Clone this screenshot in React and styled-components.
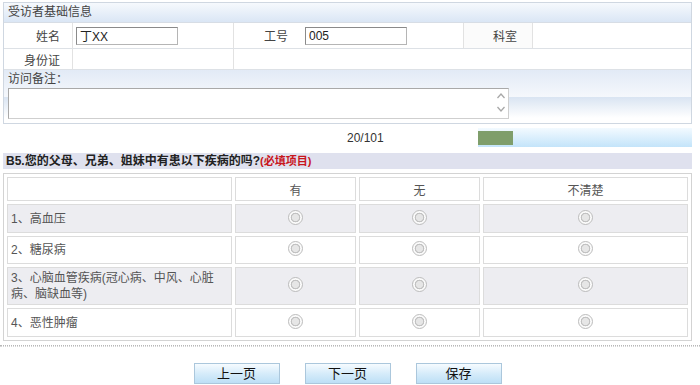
import React from "react";
import styled, { createGlobalStyle } from "styled-components";

const Global = createGlobalStyle`
  html, body { margin: 0; padding: 0; background: #fff; }
  body {
    font-family: "Liberation Sans", "Noto Sans CJK SC", sans-serif;
    font-size: 12px;
    color: #333;
  }
  * { box-sizing: border-box; }
`;

const Page = styled.div`
  width: 700px;
  height: 385px;
  overflow: hidden;
  padding-top: 2px;
`;

const Content = styled.div`
  margin: 0 8px 0 3px;
`;

const Panel = styled.section`
  border: 1px solid #cfd7e1;
`;

const PanelHeader = styled.div`
  height: 20px;
  line-height: 19px;
  padding-left: 4px;
  border-bottom: 1px solid #d7dde5;
  background: linear-gradient(#f6f9fd, #dae6f5);
  color: #444;
`;

const InfoGrid = styled.div`
  display: grid;
  grid-template-columns: 69px 161px 230px 69px 1fr;
  grid-template-rows: 26px 21px;
`;

const Cell = styled.div`
  display: flex;
  align-items: center;
  justify-content: ${(p) => (p.$label ? "flex-end" : "flex-start")};
  padding: ${(p) => (p.$label ? `0 ${p.$pr || 12}px 0 0` : "0 0 0 3px")};
  border-right: ${(p) => (p.$last ? "none" : "1px solid #e2e2e2")};
  border-bottom: 1px solid #dde1e6;
  background: ${(p) => (p.$shade ? "#fbfbfb" : "#fff")};
  grid-column: ${(p) => (p.$span ? `span ${p.$span}` : "auto")};
  color: #444;
`;

const InlineLabel = styled.span`
  width: 51px;
  text-align: right;
  margin-right: 17px;
  color: #444;
`;

const TextInput = styled.input`
  width: 102px;
  height: 18px;
  border: 1px solid #8a8a8a;
  border-right-color: #b5b5b5;
  border-bottom-color: #b5b5b5;
  padding: 0 0 0 3px;
  font: inherit;
  font-size: 12px;
  color: #222;
  background: #fff;
  outline: none;
`;

const Remarks = styled.div`
  background: linear-gradient(
    180deg,
    #e2eaf6 0px,
    #f5f8fc 27px,
    #d9e4f2 27px,
    #ffffff 48px,
    #ffffff 100%
  );
`;

const RemarksTitle = styled.div`
  height: 18px;
  line-height: 18px;
  padding-left: 4px;
  color: #444;
`;

const TextWrap = styled.div`
  padding: 0 0 4px 4px;
`;

const TextBox = styled.div`
  position: relative;
  width: 501px;
  height: 31px;
`;

const Area = styled.textarea`
  display: block;
  width: 100%;
  height: 100%;
  resize: none;
  overflow: hidden;
  border: 1px solid #a9a9a9;
  border-right-color: #cfcfcf;
  border-bottom-color: #cfcfcf;
  background: #fff;
  font: inherit;
  outline: none;
`;

const ScrollArrows = styled.svg`
  position: absolute;
  right: 3px;
  top: 4px;
`;

const ProgressRow = styled.div`
  display: grid;
  grid-template-columns: 344px 131px 1fr;
  height: 19px;
  margin-top: 4px;
  align-items: center;
`;

const Count = styled.span`
  grid-column: 2;
  color: #333;
  font-size: 12px;
`;

const Bar = styled.div`
  height: 19px;
  display: flex;
  align-items: center;
  background: linear-gradient(#f3faff, #c3e4fa);
`;

const Fill = styled.div`
  height: 14px;
  background: #7f9e6b;
`;

const QuestionTitle = styled.div`
  margin-top: 6px;
  height: 16px;
  line-height: 16px;
  padding-left: 3px;
  background: #dfe1ee;
  font-weight: bold;
  color: #222;
  font-size: 12px;
`;

const Required = styled.span`
  color: #c8161d;
  font-size: 11px;
`;

const Matrix = styled.div`
  margin-top: 4px;
  display: grid;
  grid-template-columns: 225px 121px 121px 1fr;
  grid-template-rows: 24px 29px 28px 38px 29px;
  gap: 3px;
  padding: 3px;
  border: 1px solid #d3d3d3;
`;

const HeadCell = styled.div`
  display: flex;
  align-items: center;
  justify-content: center;
  border: 1px solid #dcdcdc;
  background: #fff;
  color: #555;
`;

const RowLabel = styled.div`
  display: flex;
  align-items: center;
  padding-left: 3px;
  line-height: 16px;
  border: 1px solid #dcdcdc;
  background: ${(p) => (p.$shade ? "#ededf1" : "#fff")};
  color: #555;
`;

const OptionCell = styled.div`
  display: flex;
  align-items: center;
  justify-content: center;
  border: 1px solid #dcdcdc;
  background: ${(p) => (p.$shade ? "#ededf1" : "#fff")};
`;

const Radio = styled.input.attrs({ type: "radio" })`
  appearance: none;
  -webkit-appearance: none;
  margin: 0 0 3px 0;
  width: 15px;
  height: 15px;
  border-radius: 50%;
  border: 1px solid #bcbcbc;
  background: radial-gradient(
    circle,
    #e6e6e6 0 3.4px,
    #c2c2c2 3.8px 4.7px,
    #fbfbfb 5.1px
  );
`;

const Separator = styled.div`
  margin-top: 4px;
  height: 2px;
  border-top: 1px dotted #b8b8b8;
  border-bottom: 1px dotted #d6d6d6;
`;

const ButtonBar = styled.div`
  display: flex;
  justify-content: center;
  gap: 25px;
  margin-top: 16px;
  padding-right: 5px;
`;

const Button = styled.button`
  width: 86px;
  height: 21px;
  padding: 0;
  border: 1px solid #abc7dc;
  background: linear-gradient(#f6fbff, #d6ecfa 50%, #bddff6);
  font-family: "Liberation Sans", "Noto Sans CJK SC", sans-serif;
  font-size: 13px;
  color: #111;
  line-height: 19px;
`;

const rows = [
  { label: "1、高血压", shade: true },
  { label: "2、糖尿病", shade: false },
  {
    label: (
      <>
        3、心脑血管疾病(冠心病、中风、心脏
        <br />
        病、脑缺血等)
      </>
    ),
    shade: true,
  },
  { label: "4、恶性肿瘤", shade: false },
];

const options = ["有", "无", "不清楚"];

export default function App() {
  return (
    <Page>
      <Global />
      <Content>
        <Panel>
          <PanelHeader>受访者基础信息</PanelHeader>
          <InfoGrid>
            <Cell $label>姓名</Cell>
            <Cell>
              <TextInput defaultValue="丁XX" />
            </Cell>
            <Cell>
              <InlineLabel>工号</InlineLabel>
              <TextInput defaultValue="005" />
            </Cell>
            <Cell $label $shade $pr={15}>科室</Cell>
            <Cell $last />
            <Cell $label>身份证</Cell>
            <Cell />
            <Cell $span={3} $last />
          </InfoGrid>
          <Remarks>
            <RemarksTitle>访问备注：</RemarksTitle>
            <TextWrap>
              <TextBox>
                <Area />
                <ScrollArrows width="10" height="22" viewBox="0 0 10 22">
                  <path d="M1.5 6 L5 2 L8.5 6" fill="none" stroke="#a8a8a8" strokeWidth="1.3" />
                  <path d="M1.5 15 L5 19 L8.5 15" fill="none" stroke="#a8a8a8" strokeWidth="1.3" />
                </ScrollArrows>
              </TextBox>
            </TextWrap>
          </Remarks>
        </Panel>

        <ProgressRow>
          <Count>20/101</Count>
          <Bar>
            <Fill style={{ width: "35px" }} />
          </Bar>
        </ProgressRow>

        <QuestionTitle>
          B5.您的父母、兄弟、姐妹中有患以下疾病的吗?<Required>(必填项目)</Required>
        </QuestionTitle>

        <Matrix>
          <HeadCell />
          {options.map((o) => (
            <HeadCell key={o}>{o}</HeadCell>
          ))}
          {rows.map((r, i) => (
            <React.Fragment key={i}>
              <RowLabel $shade={r.shade}>
                <span>{r.label}</span>
              </RowLabel>
              {options.map((o) => (
                <OptionCell key={o} $shade={r.shade}>
                  <Radio name={`q${i}`} />
                </OptionCell>
              ))}
            </React.Fragment>
          ))}
        </Matrix>
      </Content>

      <Separator />

      <ButtonBar>
        <Button>上一页</Button>
        <Button>下一页</Button>
        <Button>保存</Button>
      </ButtonBar>
    </Page>
  );
}
